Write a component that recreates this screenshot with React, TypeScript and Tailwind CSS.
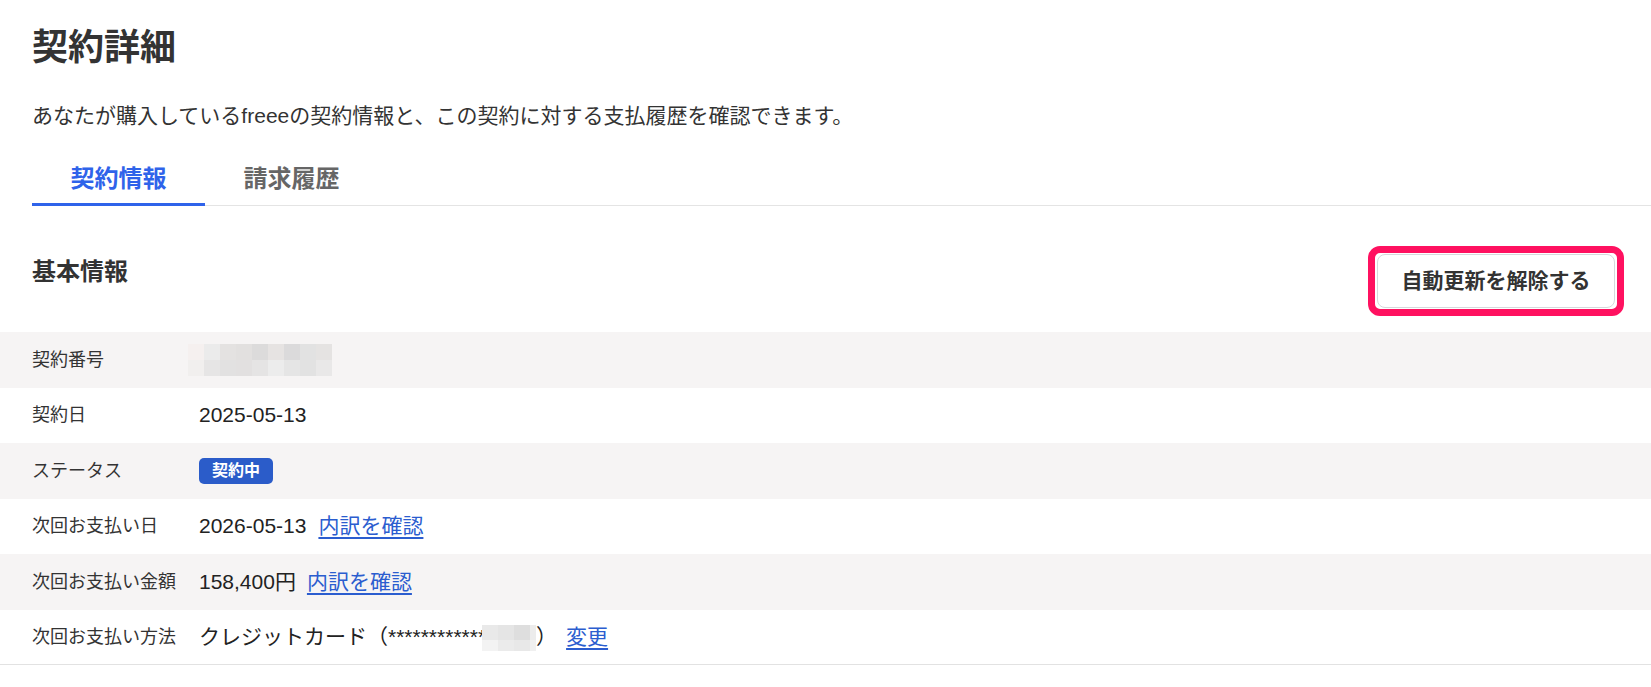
import React from "react";

const blurA = [
  ["#f5f0ef", "#ebebeb", "#e4e2e1", "#e2e0df", "#dcdbdb", "#e6e3e2", "#dbdadb", "#e2e2e2", "#e5e3e2"],
  ["#f1efee", "#e6e5e5", "#e2e1e1", "#e2e0e0", "#e5e4e4", "#ececec", "#e5e5e5", "#e2e2e2", "#e9e8e8"],
];

const blurB = [
  ["#e9e9e9", "#e5e5e5", "#dedede", "#ececec"],
  ["#f3f3f3", "#ebebeb", "#e8e8e8", "#f0f0f0"],
];

function Pixels({ grid, cw, ch }: { grid: string[][]; cw: number[]; ch: number[] }) {
  return (
    <span className="inline-flex flex-col align-middle">
      {grid.map((row, r) => (
        <span key={r} className="flex">
          {row.map((c, i) => (
            <span key={i} className="block" style={{ background: c, width: cw[i], height: ch[r] }} />
          ))}
        </span>
      ))}
    </span>
  );
}

function Link({ children, className = "" }: { children: React.ReactNode; className?: string }) {
  return (
    <a className={"text-[#2b5dcf] underline decoration-[1.5px] underline-offset-[4px] cursor-pointer " + className}>
      {children}
    </a>
  );
}

function Row({ label, gray, last, children }: { label: string; gray?: boolean; last?: boolean; children: React.ReactNode }) {
  return (
    <div
      className={
        "flex items-center h-[55.5px] px-[32px] " +
        (gray ? "bg-[#f6f4f4] " : "bg-white ") +
        (last ? "border-b border-[#e2e2e2]" : "")
      }
    >
      <div className="w-[167px] shrink-0 text-[18px] leading-[28px] text-[#333]">{label}</div>
      <div className="flex items-center text-[21px] leading-[30px] text-[#222]">{children}</div>
    </div>
  );
}

export default function App() {
  return (
    <div className="bg-white text-[#333] font-['Liberation_Sans','Noto_Sans_CJK_JP',sans-serif] pt-[30px] min-h-[687px]">
      <h1 className="px-[32px] text-[36px] leading-[36px] font-bold text-[#333]">契約詳細</h1>
      <p className="px-[32px] mt-[35px] text-[21px] leading-[30px] text-[#333]">
        あなたが購入しているfreeeの契約情報と、この契約に対する支払履歴を確認できます。
      </p>

      <div className="ml-[32px] mt-[32px] flex border-b border-[#e4e4e4]">
        <div className="-mb-px w-[173px] text-center text-[24px] leading-[32px] font-bold text-[#2f63ea] pb-[8px] border-b-[3px] border-[#2f63ea] cursor-pointer">
          契約情報
        </div>
        <div className="-mb-px w-[173px] text-center text-[24px] leading-[32px] font-bold text-[#666] pb-[8px] border-b-[3px] border-transparent cursor-pointer">
          請求履歴
        </div>
      </div>

      <div className="flex justify-between items-start pl-[32px] pr-[27px] pt-[40px] pb-[16px]">
        <h2 className="mt-[10px] text-[24px] leading-[32px] font-bold text-[#333]">基本情報</h2>
        <div className="rounded-[12px] border-[7px] border-[#ff1160] px-[2px] py-px">
          <button className="w-[238px] h-[54px] rounded-[8px] border border-[#d6d8db] bg-white text-[21px] leading-[30px] font-bold text-[#333]">
            自動更新を解除する
          </button>
        </div>
      </div>

      <div>
        <Row label="契約番号" gray>
          <span className="-ml-[11px]">
            <Pixels grid={blurA} cw={[16, 16, 16, 16, 16, 16, 16, 16, 16]} ch={[16, 16]} />
          </span>
        </Row>
        <Row label="契約日">2025-05-13</Row>
        <Row label="ステータス" gray>
          <span className="inline-flex items-center h-[26px] px-[13px] rounded-[5px] bg-[#2b5cc9] text-white text-[16px] leading-[20px] font-bold">
            契約中
          </span>
        </Row>
        <Row label="次回お支払い日">
          <span>2026-05-13</span>
          <Link className="ml-[12px]">内訳を確認</Link>
        </Row>
        <Row label="次回お支払い金額" gray>
          <span>158,400円</span>
          <Link className="ml-[11px]">内訳を確認</Link>
        </Row>
        <Row label="次回お支払い方法" last>
          <span>クレジットカード（************</span>
          <span className="-ml-[4px]">
            <Pixels grid={blurB} cw={[16, 16, 16, 6]} ch={[15, 11]} />
          </span>
          <span>）</span>
          <Link className="ml-[9px]">変更</Link>
        </Row>
      </div>
    </div>
  );
}
